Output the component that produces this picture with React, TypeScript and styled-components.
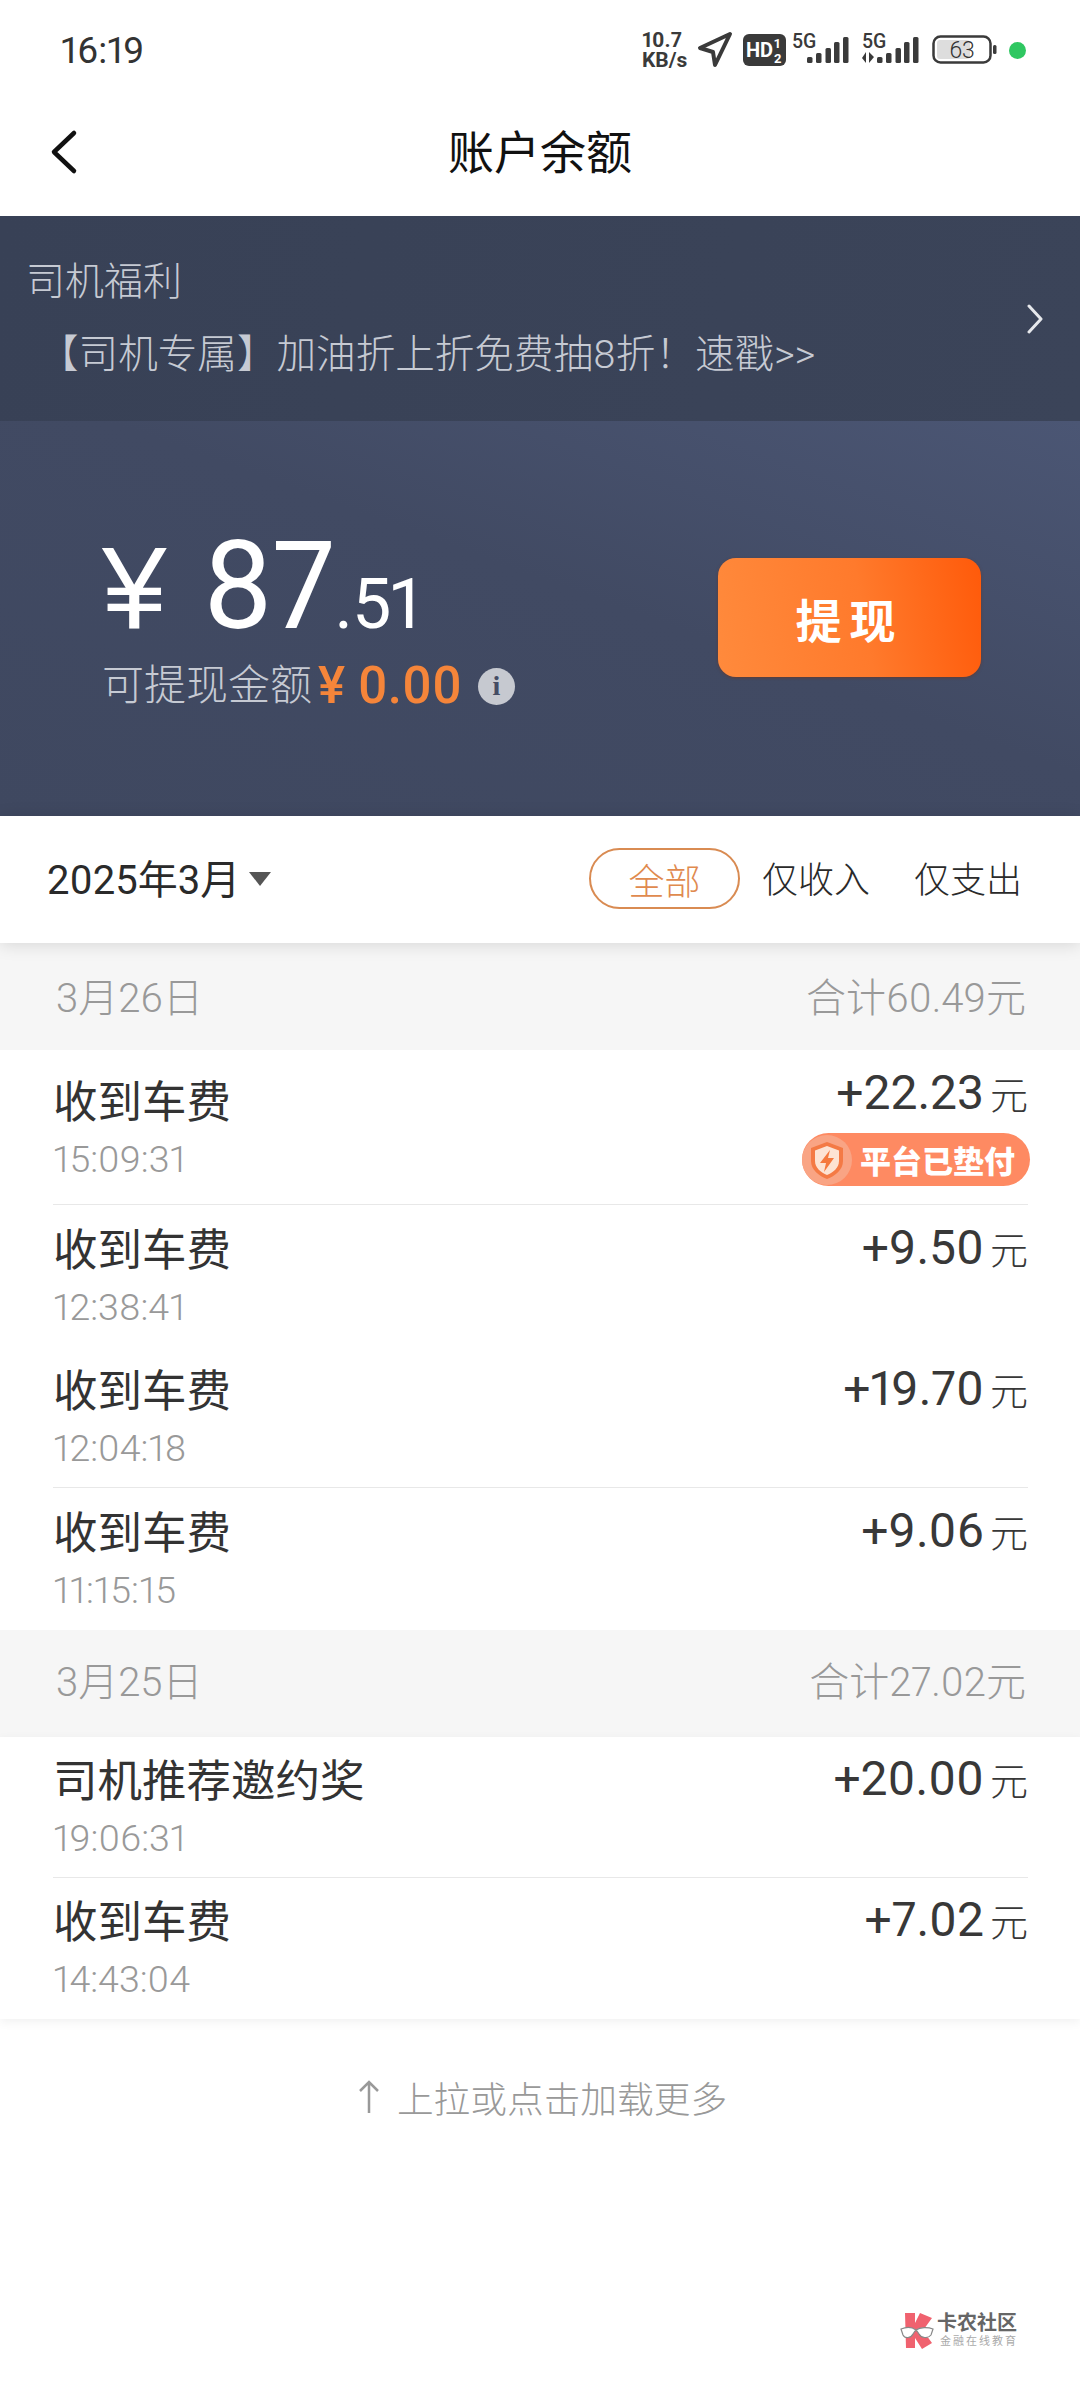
import React from "react";
import styled, { createGlobalStyle } from "styled-components";

const Global = createGlobalStyle`
  html, body { margin: 0; padding: 0; background: #fff; }
  body { font-family: Roboto, "Noto Sans CJK SC", sans-serif; font-variant-numeric: proportional-nums; }
`;
const Page = styled.div`
  width: 1080px; height: 2400px; background: #fff; display: flex; flex-direction: column; overflow: hidden; position: relative;
`;
const StatusBar = styled.div`
  height: 100px; flex: none; display: flex; align-items: center; justify-content: space-between; padding: 0 54px 0 61px; box-sizing: border-box; color: #3a3a3a;
`;
const Time = styled.div` font-size: 37px; font-weight: 400; color: #333; `;
const StatusIcons = styled.div` display: flex; align-items: center; height: 40px; `;
const Speed = styled.div` font-size: 21px; font-weight: 700; line-height: 20px; width: 48px; color: #3a3a3a; white-space: nowrap; `;
const Dot = styled.div` width: 17px; height: 17px; border-radius: 50%; background: #2fc761; margin-left: 12px; `;
const Icon = styled.svg<{ $ml?: number }>` display: block; flex: none; margin-left: ${p => p.$ml ?? 0}px; overflow: visible; `;
const Nav = styled.div` height: 116px; flex: none; display: flex; align-items: center; justify-content: center; position: relative; font-size: 46px; color: #111; box-sizing: border-box; padding-bottom: 18px; `;
const Back = styled.svg` position: absolute; left: 47px; top: 28px; `;
const Banner = styled.div`
  height: 205px; flex: none; box-sizing: border-box; padding: 41px 0 0 26px; position: relative;
  background: linear-gradient(100deg, #384156 0%, #3b4459 100%);
  color: #c6cad3; font-size: 39px; font-weight: 300;
`;
const BannerTitle = styled.div` line-height: 50px; `;
const BannerLine = styled.div` line-height: 50px; margin-top: 23px; margin-left: 13px; white-space: nowrap; font-size: 39.6px; `;
const BannerArrow = styled.svg` position: absolute; right: 36px; top: 88px; `;
const Balance = styled.div`
  height: 395px; flex: none; display: flex; align-items: flex-start; justify-content: space-between; box-sizing: border-box; padding: 114px 99px 0 102px;
  background: linear-gradient(200deg, #4b5674 0%, #414a63 45%, #3f4860 100%);
`;
const Amount = styled.div` display: flex; align-items: baseline; color: #fff; line-height: 104px; white-space: nowrap; `;
const Yen = styled.span` font-size: 116px; font-weight: 400; margin-right: 36px; font-family: "Liberation Sans", sans-serif; `;
const Big = styled.span` font-size: 122px; font-weight: 400; letter-spacing: -1px; `;
const Small = styled.span` font-size: 70px; font-weight: 400; letter-spacing: -1px; `;
const Avail = styled.div` display: flex; align-items: center; margin-top: 5px; color: #c6cad3; font-size: 42px; font-weight: 300; white-space: nowrap; line-height: 50px; `;
const AvailVal = styled.span` color: #f5853a; font-weight: 500; font-size: 51px; margin-left: 6px; `;
const Info = styled.span` width: 37px; height: 37px; border-radius: 50%; background: #c6c9d0; color: #444c64; font-size: 28px; font-weight: 900; display: flex; align-items: center; justify-content: center; margin-left: 16px; font-family: "Liberation Serif", serif; `;
const Withdraw = styled.div`
  width: 263px; height: 119px; margin-top: 23px; border-radius: 18px; background: linear-gradient(80deg, #ff8a3c 0%, #ff7a2c 55%, #ff5a0a 100%);
  color: #fff; font-size: 46px; font-weight: 700; letter-spacing: 8px; display: flex; align-items: center; justify-content: center; box-shadow: 0 1px 3px rgba(120,50,20,.6);
`;
const Filter = styled.div`
  height: 127px; flex: none; display: flex; align-items: center; justify-content: space-between; box-sizing: border-box; padding: 0 58px 5px 47px; background: #fff; position: relative; z-index: 1;
  box-shadow: 0 2px 16px rgba(0,0,0,.13); font-weight: 300;
`;
const Month = styled.div` display: flex; align-items: center; font-size: 40px; color: #2a2a2a; font-weight: 400; `;
const Caret = styled.span` width: 0; height: 0; margin-left: 9px; margin-top: 4px; border-left: 11px solid transparent; border-right: 11px solid transparent; border-top: 14px solid #555; `;
const Tabs = styled.div` display: flex; align-items: center; `;
const ActiveTab = styled.div`
  font-size: 36px; display: flex; align-items: center; justify-content: center; height: 61px; width: 151px; box-sizing: border-box; margin-top: 3px;
  border: 2px solid #d98b52; border-radius: 31px; color: #e08a4e; margin-right: 22px;
`;
const Tab = styled.div<{ $gap?: number }>`
  font-size: 36px; color: #2a2a2a; margin-left: ${p => p.$gap ?? 0}px;
`;
const DayHead = styled.div<{ $pb: number }>`
  height: 107px; flex: none; display: flex; align-items: center; justify-content: space-between; box-sizing: border-box; padding: 0 54px ${p => p.$pb}px 56px; background: #f6f6f6; color: #999; font-size: 40px; font-weight: 300;
`;
const Group = styled.div<{ $shadow?: boolean }>`
  background: #fff; flex: none; position: relative; ${p => p.$shadow ? "box-shadow: 0 3px 10px rgba(0,0,0,.06);" : ""}
`;
const Row = styled.div<{ $h: number; $line?: boolean; $pad?: number }>`
  height: ${p => p.$h}px; margin: 0 52px 0 53px; box-sizing: border-box; display: flex; justify-content: space-between; padding-top: ${p => p.$pad ?? 19}px;
  ${p => p.$line ? "border-bottom: 1px solid #e8e8e8;" : ""}
`;
const Left = styled.div<{ $shift?: number }>` display: flex; flex-direction: column; margin-top: ${p => p.$shift ?? 0}px; `;
const Title = styled.div` font-size: 44.5px; line-height: 54px; color: #333; font-weight: 400; white-space: nowrap; `;
const Stamp = styled.div` font-size: 37.5px; line-height: 44px; margin-top: 7px; color: #999; font-weight: 300; `;
const Right = styled.div` display: flex; flex-direction: column; align-items: flex-end; margin-top: -3px; `;
const Money = styled.div` font-size: 48px; line-height: 54px; color: #383838; font-weight: 400; display: flex; align-items: baseline; `;
const Unit = styled.span` font-size: 38px; margin-left: 6px; font-weight: 300; `;
const Badge = styled.div`
  height: 53px; width: 228px; margin-top: 10px; margin-right: -2px; border-radius: 27px; background: #fe8a62; color: #fff; font-size: 31px; font-weight: 900;
  display: flex; align-items: center; white-space: nowrap;
`;
const BadgeIcon = styled.svg` flex: none; margin-right: 8px; `;
const More = styled.div` flex: none; margin-top: 50px; display: flex; justify-content: center; align-items: center; color: #999; font-size: 36.7px; font-weight: 300; height: 56px; padding-left: 4px; `;
const MoreArrow = styled.svg` margin-right: 16px; `;
const Mark = styled.div` position: absolute; left: 900px; top: 2312px; display: flex; align-items: flex-start; `;
const MarkText = styled.div` display: flex; flex-direction: column; margin-left: 3px; `;
const MarkMain = styled.div` font-size: 20px; line-height: 22px; font-weight: 700; color: #666; white-space: nowrap; `;
const MarkSub = styled.div` font-size: 11px; line-height: 14px; color: #aaa; letter-spacing: 2px; white-space: nowrap; margin-top: 1px; margin-left: 3px; `;

const Bars = () => (
  <g fill="#3a3a3a">
    <rect x="15" y="27" width="5.5" height="6" rx="1.5" />
    <rect x="24" y="23" width="5.5" height="10" rx="1.5" />
    <rect x="33.5" y="18" width="5.5" height="15" rx="1.5" />
    <rect x="42" y="12" width="5.5" height="21" rx="1.5" />
    <rect x="51" y="7" width="5.5" height="26" rx="1.5" />
  </g>
);

type Item = { t: string; s: string; m: string; h: number; line?: boolean; badge?: boolean; pad?: number; shift?: number };
const Entry = ({ t, s, m, h, line, badge, pad, shift }: Item) => (
  <Row $h={h} $line={line} $pad={pad}>
    <Left $shift={shift}><Title>{t}</Title><Stamp>{s}</Stamp></Left>
    <Right>
      <Money>{m}<Unit>元</Unit></Money>
      {badge && (
        <Badge>
          <BadgeIcon width="50" height="50" viewBox="0 0 50 50">
            <circle cx="25" cy="25" r="25" fill="#f9a484" />
            <path d="M25 7 L41 13 V26 C41 35 33 41 25 44 C17 41 9 35 9 26 V13 Z" fill="#f47a45" />
            <path d="M25 11 L37 15.5 V26 C37 33 31 37.5 25 40 C19 37.5 13 33 13 26 V15.5 Z" fill="#fde3d3" />
            <path d="M28 15 L18 28 H24 L22 37 L32 23 H26 Z" fill="#f5793e" />
          </BadgeIcon>
          平台已垫付
        </Badge>
      )}
    </Right>
  </Row>
);

export default function App() {
  return (
    <Page>
      <Global />
      <StatusBar>
        <Time>16:19</Time>
        <StatusIcons>
          <Speed>10.7<br />KB/s</Speed>
          <Icon $ml={8} width="34" height="36" viewBox="0 0 34 36">
            <path d="M32 2 L2 16 L15 20 L17 33 Z" fill="none" stroke="#3a3a3a" strokeWidth="4" strokeLinejoin="round" />
          </Icon>
          <Icon $ml={11} width="43" height="32" viewBox="0 0 43 32">
            <rect width="43" height="32" rx="6" fill="#3a3a3a" />
            <text x="3" y="23" fontSize="20" fontWeight="700" fill="#fff" fontFamily="Roboto">HD</text>
            <text x="31" y="14" fontSize="13" fontWeight="700" fill="#fff" fontFamily="Roboto">1</text>
            <text x="31" y="29" fontSize="13" fontWeight="700" fill="#fff" fontFamily="Roboto">2</text>
          </Icon>
          <Icon $ml={6} width="57" height="40" viewBox="0 0 57 40">
            <text x="0" y="18" fontSize="19.5" fontWeight="500" fill="#3a3a3a" fontFamily="Roboto">5G</text>
            <Bars />
          </Icon>
          <Icon $ml={13} width="57" height="40" viewBox="0 0 57 40">
            <text x="0" y="18" fontSize="19.5" fontWeight="500" fill="#3a3a3a" fontFamily="Roboto">5G</text>
            <path d="M4 22 V33 L0 28 Z M7 22 V33 L12 27 Z" fill="#3a3a3a" />
            <Bars />
          </Icon>
          <Icon $ml={13} width="65" height="30" viewBox="0 0 65 30">
            <rect x="1.5" y="1.5" width="57" height="26" rx="7" fill="none" stroke="#3a3a3a" strokeWidth="2.5" />
            <rect x="5" y="5" width="33" height="19" rx="3" fill="#ddd" />
            <rect x="61" y="10" width="3.5" height="9" rx="1.5" fill="#3a3a3a" />
            <text x="30" y="23" textAnchor="middle" fontSize="23" fontWeight="300" fill="#333" fontFamily="Roboto">63</text>
          </Icon>
          <Dot />
        </StatusIcons>
      </StatusBar>
      <Nav>
        <Back width="32" height="48" viewBox="0 0 32 48">
          <path d="M27 5 L7 24 L27 43" fill="none" stroke="#111" strokeWidth="4.5" strokeLinecap="round" strokeLinejoin="round" />
        </Back>
        账户余额
      </Nav>
      <Banner>
        <BannerTitle>司机福利</BannerTitle>
        <BannerLine>【司机专属】加油折上折免费抽8折！速戳&gt;&gt;</BannerLine>
        <BannerArrow width="18" height="30" viewBox="0 0 18 30">
          <path d="M3 2 L15 15 L3 28" fill="none" stroke="#e6e8ec" strokeWidth="3" strokeLinecap="round" strokeLinejoin="round" />
        </BannerArrow>
      </Banner>
      <Balance>
        <div>
          <Amount><Yen>¥</Yen><Big>87</Big><Small>.51</Small></Amount>
          <Avail>可提现金额<AvailVal>¥ 0.00</AvailVal><Info>i</Info></Avail>
        </div>
        <Withdraw>提现</Withdraw>
      </Balance>
      <Filter>
        <Month>2025年3月<Caret /></Month>
        <Tabs>
          <ActiveTab>全部</ActiveTab>
          <Tab>仅收入</Tab>
          <Tab $gap={44}>仅支出</Tab>
        </Tabs>
      </Filter>
      <DayHead $pb={4}><span>3月26日</span><span>合计60.49元</span></DayHead>
      <Group>
        <Entry t="收到车费" s="15:09:31" m="+22.23" h={155} line badge shift={7} />
        <Entry t="收到车费" s="12:38:41" m="+9.50" h={141} />
        <Entry t="收到车费" s="12:04:18" m="+19.70" h={142} line />
        <Entry t="收到车费" s="11:15:15" m="+9.06" h={142} />
      </Group>
      <DayHead $pb={9}><span>3月25日</span><span>合计27.02元</span></DayHead>
      <Group $shadow>
        <Entry t="司机推荐邀约奖" s="19:06:31" m="+20.00" h={141} line pad={18} />
        <Entry t="收到车费" s="14:43:04" m="+7.02" h={141} pad={18} />
      </Group>
      <More>
        <MoreArrow width="24" height="36" viewBox="0 0 24 36">
          <path d="M12 34 V3 M3 12 L12 3 L21 12" fill="none" stroke="#999" strokeWidth="2.5" />
        </MoreArrow>
        上拉或点击加载更多
      </More>
      <Mark>
        <svg width="34" height="38" viewBox="0 0 34 38">
          <path d="M5 1 H15 V11 L20 1 L32 6 L24 17 V20 L32 31 L22 37 L15 26 V36 H6 Z" fill="#f0626f" />
          <path d="M1 17 C6 15 12 15 16 18 C20 15 28 15 33 17 L31 23 C28 27 21 26 19 22 L17 19 H15 L13 22 C11 26 5 27 3 23 Z" fill="#fff" stroke="#888" strokeWidth="1.2" />
        </svg>
        <MarkText>
          <MarkMain>卡农社区</MarkMain>
          <MarkSub>金融在线教育</MarkSub>
        </MarkText>
      </Mark>
    </Page>
  );
}
